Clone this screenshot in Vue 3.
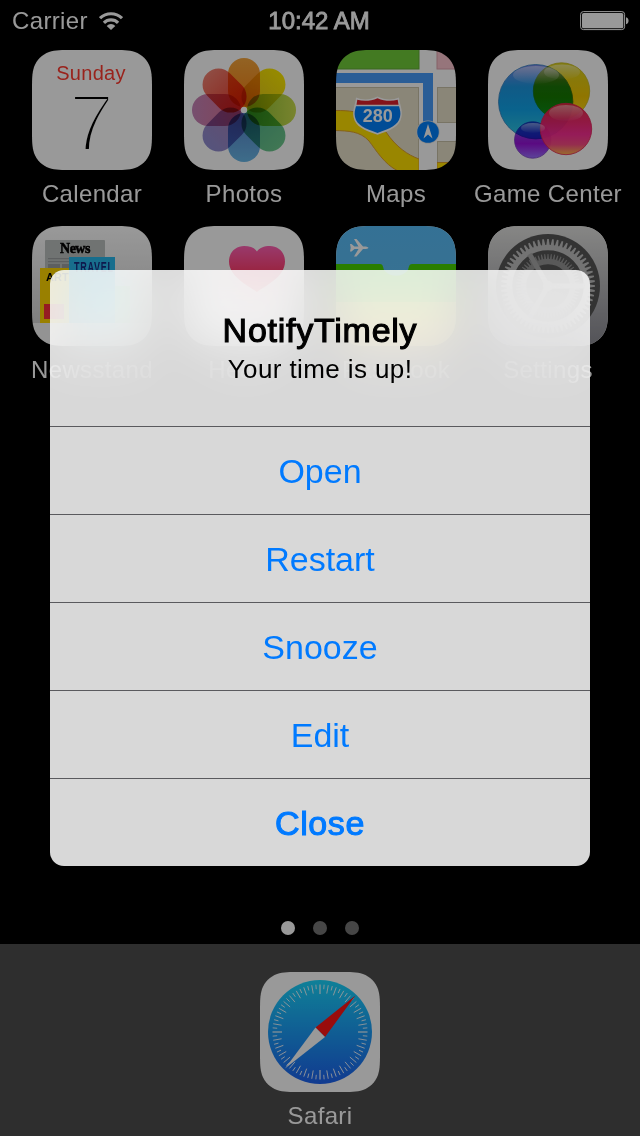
<script setup>
const R = 27
const W = 120
const p = [1.528665, 1.08849, 0.868407, 0.631494, 0.0749114, 0.372824, 0.16906].map((k) => k * R)
const [a, b, c, d, e, f, g] = p
const tile = [
  `M${a} 0H${W - a}`,
  `C${W - b} 0 ${W - c} 0 ${W - d} ${e}C${W - f} ${g} ${W - g} ${f} ${W - e} ${d}C${W} ${c} ${W} ${b} ${W} ${a}`,
  `V${W - a}`,
  `C${W} ${W - b} ${W} ${W - c} ${W - e} ${W - d}C${W - g} ${W - f} ${W - f} ${W - g} ${W - d} ${W - e}C${W - c} ${W} ${W - b} ${W} ${W - a} ${W}`,
  `H${a}`,
  `C${b} ${W} ${c} ${W} ${d} ${W - e}C${f} ${W - g} ${g} ${W - f} ${e} ${W - d}C0 ${W - c} 0 ${W - b} 0 ${W - a}`,
  `V${a}`,
  `C0 ${b} 0 ${c} ${e} ${d}C${g} ${f} ${f} ${g} ${d} ${e}C${c} 0 ${b} 0 ${a} 0Z`,
].join('')

const apps = ['Calendar', 'Photos', 'Maps', 'Game Center', 'Newsstand', 'Health', 'Passbook', 'Settings']
const actions = ['Open', 'Restart', 'Snooze', 'Edit', 'Close']

const petals = [
  ['#f5a53c', '#f07d10'],
  ['#fbe800', '#dcc020'],
  ['#c9dc4e', '#86bc30'],
  ['#6cc78c', '#4fae88'],
  ['#68b6e6', '#5680c8'],
  ['#8f8cd0', '#a880b4'],
  ['#c583b8', '#dc7090'],
  ['#f08070', '#e83a2c'],
]

const ticks = Array.from({ length: 72 }, (_, i) => ({
  angle: i * 5,
  end: i % 18 === 0 ? 22 : i % 2 === 0 ? 21 : 17,
}))
const teeth = (n) => Array.from({ length: n }, (_, i) => (i * 360) / n)
</script>

<template>
  <div class="phone">
    <svg class="defs" width="0" height="0">
      <defs>
        <clipPath id="tile"><path :d="tile" /></clipPath>
        <linearGradient v-for="(col, i) in petals" :id="'petal' + i" :key="i" x1="0" y1="0" x2="0" y2="1">
          <stop offset="0" :stop-color="col[0]" /><stop offset="1" :stop-color="col[1]" />
        </linearGradient>
        <linearGradient id="bubbleBlue" x1="0" y1="0" x2="0" y2="1">
          <stop offset="0" stop-color="#7c86e6" /><stop offset=".3" stop-color="#1c96e0" />
          <stop offset=".6" stop-color="#10a4ea" /><stop offset="1" stop-color="#35cbe0" />
        </linearGradient>
        <linearGradient id="bubbleYellow" x1="0" y1="0" x2="0" y2="1">
          <stop offset="0" stop-color="#d8d020" /><stop offset=".6" stop-color="#f0c400" /><stop offset="1" stop-color="#ffd820" />
        </linearGradient>
        <linearGradient id="bubblePurple" x1="0" y1="0" x2="0" y2="1">
          <stop offset="0" stop-color="#7c60e0" /><stop offset=".6" stop-color="#9612d8" /><stop offset="1" stop-color="#9a70ff" />
        </linearGradient>
        <linearGradient id="bubblePink" x1="0" y1="0" x2="0" y2="1">
          <stop offset="0" stop-color="#e8283c" /><stop offset=".35" stop-color="#f01c64" />
          <stop offset=".6" stop-color="#f8208c" /><stop offset=".8" stop-color="#f8407c" /><stop offset="1" stop-color="#ffb040" />
        </linearGradient>
        <linearGradient id="shine" x1="0" y1="0" x2="0" y2="1">
          <stop offset="0" stop-color="#fff" stop-opacity=".45" /><stop offset="1" stop-color="#fff" stop-opacity=".02" />
        </linearGradient>
        <linearGradient id="shelf" x1="0" y1="0" x2="0" y2="1">
          <stop offset="0" stop-color="#fff" /><stop offset="1" stop-color="#d4d4d4" />
        </linearGradient>
        <linearGradient id="heart" x1="0" y1="0" x2="0" y2="1">
          <stop offset="0" stop-color="#ff61b4" /><stop offset="1" stop-color="#ff2136" />
        </linearGradient>
        <linearGradient id="sky" x1="0" y1="0" x2="0" y2="1">
          <stop offset="0" stop-color="#58bcf8" /><stop offset="1" stop-color="#62c0f0" />
        </linearGradient>
        <linearGradient id="steel" x1="0" y1="0" x2="0" y2="1">
          <stop offset="0" stop-color="#e0e0de" /><stop offset="1" stop-color="#8a8a92" />
        </linearGradient>
        <linearGradient id="compass" x1="0" y1="0" x2="0" y2="1">
          <stop offset="0" stop-color="#1ad6fd" /><stop offset="1" stop-color="#1d62f0" />
        </linearGradient>
      </defs>
    </svg>

    <header class="status">
      <div class="carrier">
        <span>Carrier</span>
        <svg width="24" height="18" viewBox="0 0 24 18">
          <g fill="none" stroke="#fff" stroke-width="3.2">
            <path d="M1 6.2A15.8 15.8 0 0 1 23 6.2" /><path d="M4.9 10.800A10 10 0 0 1 19.1 10.800" />
          </g>
          <path d="M7.700 13.900a6 6 0 0 1 8.600 0L12 18Z" fill="#fff" />
        </svg>
      </div>
      <span class="clock">10:42 AM</span>
      <svg class="battery" width="50" height="20" viewBox="0 0 50 20">
        <rect x=".6" y=".6" width="44" height="18" rx="2.8" fill="none" stroke="#fff" stroke-width="1" />
        <rect x="2" y="2" width="41.3" height="15.3" rx="1.6" fill="#fff" />
        <path d="M46 6.2c3.4.4 3.4 6.6 0 7Z" fill="#fff" />
      </svg>
    </header>

    <main class="grid">
      <div v-for="name in apps" :key="name" class="app">
        <svg class="icon" viewBox="0 0 120 120">
          <g clip-path="url(#tile)">
            <rect width="120" height="120" fill="#fff" />

            <g v-if="name === 'Calendar'">
              <text class="weekday" x="59" y="30">Sunday</text>
              <text class="day" x="59.500" y="101">7</text>
            </g>

            <g v-else-if="name === 'Photos'" class="petals">
              <rect
                v-for="(col, i) in petals" :key="i" x="44" y="8" width="32" height="49" rx="16"
                :fill="`url(#petal${i})`" :transform="`rotate(${i * 45} 60 60)`"
              />
              <circle cx="60" cy="60" r="3" fill="#fff" />
            </g>

            <g v-else-if="name === 'Maps'">
              <rect x="-1" y="-1" width="84" height="20" fill="#71cb39" stroke="#62ab38" />
              <rect x="101" y="-1" width="20" height="20" fill="#fac3cd" stroke="#dfa3ae" />
              <g fill="#e6dfc9" stroke="#c9c2a9">
                <rect x="-1" y="37.5" width="83.5" height="84" />
                <rect x="101.5" y="37.5" width="20" height="35" />
                <rect x="101.5" y="91.5" width="20" height="30" />
              </g>
              <g fill="#ffdf00" stroke="#dfa12a">
                <path d="M-1 60.5C28 60 40 68 50 82C60 97 72 105 83 109V121H62C48 114 40 100 33 91C24 81 12 81 -1 80.5Z" />
                <path d="M101 112.5H121V121H101Z" />
              </g>
              <rect x="83" y="37" width="18" height="84" fill="#fff" />
              <path d="M0 28H92V74" fill="none" stroke="#469bfb" stroke-width="10" />
              <path d="M20 47.500C27 50.500 34 50 41.500 46.500C49 50 56 50.500 63 47.500C63.500 54 67 60 65.500 67C63.500 77 55 80 41.500 84.800C28 80 19.500 77 17.500 67C16 60 19.500 54 20 47.500Z" fill="#fff" />
              <path d="M21.300 49.800C28 51.500 35 51 41.500 48.200C48 51 55 51.500 61.700 49.800L62.500 54.800H20.500Z" fill="#dc202c" />
              <path d="M20 56.300H63C64 60 65 63 64 67C62 75.500 54 78.500 41.500 83C29 78.500 21 75.500 19 67C18 63 19 60 20 56.300Z" fill="#007ffb" />
              <text class="route" x="41.8" y="72.300">280</text>
              <circle cx="92" cy="82" r="11.600" fill="#e4e4e4" />
              <circle cx="92" cy="82" r="10.800" fill="#007ffb" />
              <path d="M92 74L96.500 88.500L92 84.500L87.500 88.500Z" fill="#fff" />
            </g>

            <g v-else-if="name === 'Game Center'" class="bubbles">
              <circle cx="73.500" cy="41" r="28.200" fill="url(#bubbleYellow)" stroke="#c4b820" stroke-width=".8" />
              <circle cx="47.700" cy="51.700" r="37.200" fill="url(#bubbleBlue)" stroke="#3480c0" stroke-width=".8" />
              <circle cx="44.700" cy="90" r="18.200" fill="url(#bubblePurple)" stroke="#7840c0" stroke-width=".8" />
              <g class="front">
                <circle cx="78" cy="79" r="25.700" fill="url(#bubblePink)" fill-opacity=".94" stroke="#e02050" stroke-width=".8" />
                <ellipse cx="48" cy="25" rx="23" ry="9" fill="url(#shine)" />
                <ellipse cx="74" cy="22" rx="18" ry="7.500" fill="url(#shine)" />
                <ellipse cx="78" cy="63" rx="17" ry="8" fill="url(#shine)" />
                <ellipse cx="45" cy="78" rx="12" ry="5" fill="url(#shine)" />
              </g>
            </g>

            <g v-else-if="name === 'Newsstand'">
              <rect width="120" height="97" fill="url(#shelf)" />
              <rect x="13" y="14" width="60" height="83" rx="1" fill="#bbc0be" />
              <text class="news" x="43" y="26.500">News</text>
              <g fill="#9b9fa0">
                <rect x="16" y="32" width="21" height="1.200" /><rect x="16" y="35" width="21" height="1.200" />
                <rect x="16" y="38" width="12" height="6" /><rect x="30" y="38" width="7" height="6" />
              </g>
              <rect x="59" y="60" width="39" height="37" fill="#a8f090" />
              <rect x="37" y="31" width="46" height="66" fill="#28b8ec" />
              <text class="travel" transform="translate(42 46) scale(.6 1)">TRAVEL</text>
              <rect x="8" y="42" width="29" height="55" fill="#ffd500" />
              <text class="art" x="14" y="55">ART</text>
              <rect x="12" y="78" width="20" height="15" fill="#f8303a" />
              <rect y="97" width="120" height="23" fill="#f6f6f6" />
            </g>

            <g v-else-if="name === 'Health'">
              <path d="M73 66C65 60 45 51 45 35.500C45 26 52 20 60 20C66 20 71 22 73 25.500C75 22 80 20 86 20C94 20 101 26 101 35.500C101 51 81 60 73 66Z" fill="url(#heart)" />
            </g>

            <g v-else-if="name === 'Passbook'">
              <rect width="120" height="120" fill="url(#sky)" />
              <path d="M0 38H44C47 38 47 41 48 44A14 12 0 0 0 72 44C73 41 73 38 76 38H120V120H0Z" fill="#46d200" />
              <rect y="76" width="120" height="44" fill="#ffd850" />
              <path d="M14 18H15.500L18.500 20.400H22.500L18 13H20.500L27 20.400H30Q32.500 21 32.500 21.700Q32.500 22.500 30 23H27L20.500 30.500H18L22.500 23H18.500L15.500 25.500H14L14.700 21.700Z" fill="#fff" />
            </g>

            <g v-else>
              <rect width="120" height="120" fill="url(#steel)" />
              <circle cx="60" cy="60" r="52" fill="#555" />
              <circle cx="60" cy="60" r="38.500" fill="none" stroke="#c0c0c0" stroke-width="5.500" />
              <path v-for="t in teeth(60)" :key="'o' + t" d="M58.300 19.500L59.200 13H60.800L61.700 19.500Z" fill="#c0c0c0" :transform="`rotate(${t} 60 60)`" />
              <circle cx="60" cy="60" r="24.500" fill="none" stroke="#949494" stroke-width="5.500" />
              <path v-for="t in teeth(60)" :key="'i' + t" d="M59 33.500L59.500 28H60.500L61 33.500Z" fill="#949494" :transform="`rotate(${t} 60 60)`" />
              <path v-for="t in [0, 120, 240]" :key="'s' + t" d="M60 57.500H97V62.500H60Z" fill="#a8a8a8" :transform="`rotate(${t} 60 60)`" />
              <circle cx="60" cy="60" r="5" fill="#a8a8a8" />
            </g>
          </g>
        </svg>
        <span class="label">{{ name }}</span>
      </div>
    </main>

    <nav class="pages"><i class="current"></i><i></i><i></i></nav>

    <footer class="dock">
      <div class="app">
        <svg class="icon" viewBox="0 0 120 120">
          <path :d="tile" fill="#fff" />
          <circle cx="60" cy="60" r="52" fill="url(#compass)" />
          <path
            v-for="t in ticks" :key="t.angle" :d="`M60 12.500V${t.end}`" stroke="#fff"
            :stroke-width="t.angle % 90 ? 0.8 : 1.1" :transform="`rotate(${t.angle} 60 60)`"
          />
          <path d="M95.500 23.500L55.500 55.500L65 65Z" fill="#ff1414" />
          <path d="M25 96.500L55.500 55.500L65 65Z" fill="#fff" />
        </svg>
        <span class="label">Safari</span>
      </div>
    </footer>

    <div class="dim"></div>
    <div class="frost"></div>

    <section class="alert">
      <div class="message">
        <h1>NotifyTimely</h1>
        <p>Your time is up!</p>
      </div>
      <button v-for="action in actions" :key="action" :class="{ preferred: action === 'Close' }">{{ action }}</button>
    </section>
  </div>
</template>

<style>
body {
  margin: 0;
  background: #000;
}
</style>

<style scoped>
.phone {
  position: relative;
  width: 640px;
  height: 1136px;
  overflow: hidden;
  display: flex;
  flex-direction: column;
  background: #000;
  color: #fff;
  font-family: "Liberation Sans", Arial, sans-serif;
}
.defs {
  position: absolute;
}
.status {
  height: 40px;
  display: grid;
  grid-template-columns: 1fr auto 1fr;
  align-items: center;
  padding: 0 10px 0 12px;
  font-size: 24px;
  line-height: 42px;
  box-sizing: border-box;
}
.carrier {
  display: flex;
  align-items: center;
  gap: 11px;
  letter-spacing: 0.35px;
}
.clock {
  -webkit-text-stroke: 0.8px #fff;
  margin-left: -4px;
  letter-spacing: 0;
}
.battery {
  justify-self: end;
}
.grid {
  display: grid;
  grid-template-columns: repeat(4, 120px);
  grid-auto-rows: 176px;
  column-gap: 32px;
  padding: 10px 32px 0;
}
.app {
  display: flex;
  flex-direction: column;
  align-items: center;
  width: 120px;
}
.icon {
  display: block;
  width: 120px;
  height: 120px;
  flex: none;
}
.label {
  margin-top: 10px;
  font-size: 24px;
  line-height: 28px;
  letter-spacing: 0.35px;
  white-space: nowrap;
}
.weekday {
  font-size: 20px;
  fill: #ff3b30;
  text-anchor: middle;
  letter-spacing: 0.3px;
}
.day {
  font-size: 82px;
  text-anchor: middle;
  stroke: #fff;
  stroke-width: 4.2px;
}
.route {
  font-size: 18px;
  font-weight: 700;
  fill: #fff;
  text-anchor: middle;
}
.news {
  font-family: "Liberation Serif", serif;
  font-weight: 700;
  font-size: 14px;
  text-anchor: middle;
  letter-spacing: -0.5px;
  stroke: #000;
  stroke-width: 0.5px;
}
.travel {
  font-size: 15px;
  font-weight: 700;
  fill: #182a80;
  letter-spacing: 1.2px;
}
.art {
  font-size: 11px;
  font-weight: 700;
}
.petals,
.bubbles {
  isolation: isolate;
}
.petals rect,
.bubbles > circle {
  mix-blend-mode: multiply;
}
.pages {
  margin-top: auto;
  display: flex;
  justify-content: center;
  gap: 18px;
  padding-bottom: 9px;
}
.pages i {
  width: 14px;
  height: 14px;
  border-radius: 50%;
  background: #767676;
}
.pages .current {
  background: #fff;
}
.dock {
  height: 192px;
  box-sizing: border-box;
  padding-top: 28px;
  display: flex;
  justify-content: center;
  background: #4d4d4d;
}
.dim {
  position: absolute;
  inset: 0;
  background: rgba(0, 0, 0, 0.4);
}
.frost,
.alert {
  position: absolute;
  left: 50px;
  top: 270px;
  width: 540px;
  height: 596px;
  border-radius: 14px;
}
.frost {
  backdrop-filter: blur(22px) saturate(1.4) brightness(1.1);
  opacity: 0.8;
}
.alert {
  overflow: hidden;
  color: #000;
  background: rgba(255, 255, 255, 0.847);
}
.message {
  height: 156px;
  box-sizing: border-box;
  padding-top: 40px;
  text-align: center;
}
h1 {
  margin: 0;
  font-size: 34px;
  line-height: 40px;
  font-weight: 400;
  letter-spacing: 0.75px;
  -webkit-text-stroke: 1.1px #000;
}
p {
  margin: 4px 0 0;
  font-size: 26px;
  line-height: 30px;
  letter-spacing: 0.4px;
}
button {
  display: block;
  width: 100%;
  height: 88px;
  padding: 0;
  border: 0;
  border-top: 1px solid #5a5a5e;
  background: none;
  color: #007aff;
  font: 34px/84px "Liberation Sans", Arial, sans-serif;
}
.preferred {
  -webkit-text-stroke: 1.1px #007aff;
  letter-spacing: 0.6px;
}
</style>
